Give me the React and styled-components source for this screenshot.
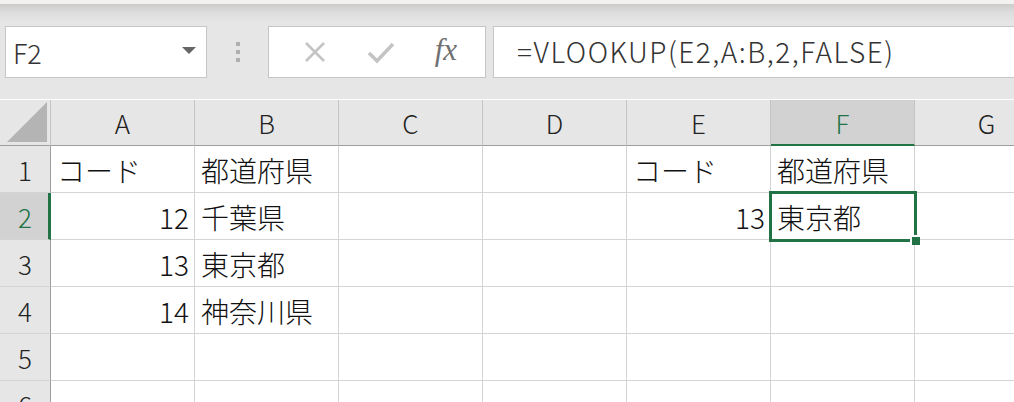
import styled, { createGlobalStyle } from 'styled-components'

const GREEN = '#217346'
const GRID = '#d4d4d4'
const HEAD_BG = '#e6e6e6'
const HEAD_SEL = '#d2d2d2'

const GlobalStyle = createGlobalStyle`
    html, body {
        margin: 0;
        padding: 0;
        background: #ffffff;
        overflow: hidden;
    }
    body {
        font-family: "Noto Sans CJK JP", "Noto Sans", sans-serif;
        color: #222;
    }
`

export const Window = styled.div`
    width: 1014px;
    height: 402px;
    overflow: hidden;
    background: ${HEAD_BG};
    display: flex;
    flex-direction: column;
`

export const TopStrip = styled.div`
    height: 4px;
    background: #f3f2f1;
    flex-shrink: 0;
`

export const FormulaBar = styled.div`
    height: 95px;
    flex-shrink: 0;
    display: flex;
    align-items: flex-start;
    padding: 22px 0 0 5px;
    box-sizing: border-box;
    background: linear-gradient(to bottom, #cbcbcb 0px, #dcdcdc 8px, ${HEAD_BG} 18px);
`

export const Box = styled.div`
    height: 52px;
    box-sizing: border-box;
    background: #fff;
    border: 1px solid #c6c6c6;
    display: flex;
    align-items: center;
`

export const NameBox = styled(Box)`
    width: 202px;
    padding: 0 10px 0 7px;
    justify-content: space-between;
    font-size: 27px;
    font-weight: 300;
    color: #333;
`

export const Caret = styled.span`
    width: 0;
    height: 0;
    border-left: 7px solid transparent;
    border-right: 7px solid transparent;
    border-top: 7px solid #666;
    margin-top: -4px;
`

export const Grip = styled.div`
    width: 61px;
    display: flex;
    flex-direction: column;
    align-items: center;
    gap: 4px;
    padding-top: 16px;
    span {
        width: 4px;
        height: 4px;
        background: #b0b0b0;
    }
`

export const ActionBox = styled(Box)`
    width: 218px;
    justify-content: space-around;
    padding: 0 8px 0 14px;
`

export const Fx = styled.span`
    font-family: "Liberation Serif", serif;
    font-style: italic;
    font-size: 31px;
    color: #707070;
    margin-top: -4px;
`

export const FormulaInput = styled(Box)`
    flex: 1;
    margin-left: 7px;
    padding: 0 0 2px 23px;
    font-size: 28px;
    font-weight: 300;
    color: #333;
    letter-spacing: 1.5px;
    border-right: none;
`

export const Sheet = styled.div`
    display: grid;
    grid-template-columns: 51px repeat(7, 144px);
    grid-template-rows: 47px;
    grid-auto-rows: 47px;
    background: #fff;
`

export const ColHead = styled.div`
    box-sizing: border-box;
    display: flex;
    align-items: center;
    justify-content: center;
    background: ${p => p.$active ? HEAD_SEL : HEAD_BG};
    color: ${p => p.$active ? GREEN : '#222'};
    font-size: 26px;
    font-weight: 300;
    border-right: 1px solid #c4c4c4;
    border-bottom: ${p => p.$active ? `2px solid ${GREEN}` : '1px solid #9e9e9e'};
    padding-top: ${p => p.$active ? '1px' : '0'};
    margin-top: 1px;
`

export const Corner = styled(ColHead)`
    align-items: flex-end;
    justify-content: flex-end;
    padding: 0 3px 3px 0;
`

export const RowHead = styled.div`
    box-sizing: border-box;
    display: flex;
    align-items: center;
    justify-content: center;
    background: ${p => p.$active ? HEAD_SEL : HEAD_BG};
    color: ${p => p.$active ? GREEN : '#222'};
    font-size: 26px;
    font-weight: 300;
    border-bottom: 1px solid ${GRID};
    border-right: ${p => p.$active ? `3px solid ${GREEN}` : '1px solid #9e9e9e'};
    padding-left: ${p => p.$active ? '2px' : '0'};
`

export const Cell = styled.div`
    position: relative;
    box-sizing: border-box;
    display: flex;
    align-items: center;
    justify-content: ${p => p.$num ? 'flex-end' : 'flex-start'};
    padding: 2px 5px 0 6px;
    font-size: 28px;
    font-weight: 300;
    color: #111;
    white-space: nowrap;
    border-right: 1px solid ${GRID};
    border-bottom: 1px solid ${GRID};
`

export const Selection = styled.div`
    position: absolute;
    z-index: 2;
    left: -2px;
    top: -2px;
    right: -3px;
    bottom: -3px;
    border: 3px solid ${GREEN};
    pointer-events: none;
`

export const Handle = styled.div`
    position: absolute;
    right: -6px;
    bottom: -6px;
    width: 8px;
    height: 8px;
    background: ${GREEN};
    border-left: 2px solid #fff;
    border-top: 2px solid #fff;
`

const columns = ['A', 'B', 'C', 'D', 'E', 'F', 'G']

const rows = [
    { A: 'コード', B: '都道府県', E: 'コード', F: '都道府県' },
    { A: '12', B: '千葉県', E: '13', F: '東京都' },
    { A: '13', B: '東京都' },
    { A: '14', B: '神奈川県' },
    {},
    {},
]

const isNum = v => /^\d+$/.test(v || '')

export default function App() {
    return (
        <Window>
            <GlobalStyle />
            <TopStrip />
            <FormulaBar>
                <NameBox>
                    <span>F2</span>
                    <Caret />
                </NameBox>
                <Grip><span /><span /><span /></Grip>
                <ActionBox>
                    <svg width="24" height="24" viewBox="0 0 24 24">
                        <path d="M3 3 L21 21 M21 3 L3 21" stroke="#c4c4c4" strokeWidth="2.6" fill="none" />
                    </svg>
                    <svg width="28" height="24" viewBox="0 0 28 24">
                        <path d="M2 13 L10 21 L26 4" stroke="#c4c4c4" strokeWidth="3.6" fill="none" />
                    </svg>
                    <Fx>fx</Fx>
                </ActionBox>
                <FormulaInput>=VLOOKUP(E2,A:B,2,FALSE)</FormulaInput>
            </FormulaBar>
            <Sheet>
                <Corner>
                    <svg width="40" height="40" viewBox="0 0 40 40">
                        <polygon points="0,40 40,40 40,0" fill="#b4b4b4" />
                    </svg>
                </Corner>
                {columns.map(c => (
                    <ColHead key={c} $active={c === 'F'}>{c}</ColHead>
                ))}
                {rows.map((row, i) => [
                    <RowHead key={`h${i}`} $active={i === 1}>{i + 1}</RowHead>,
                    ...columns.map(c => (
                        <Cell key={`${c}${i}`} $num={isNum(row[c])}>
                            {row[c]}
                            {c === 'F' && i === 1 && (
                                <Selection><Handle /></Selection>
                            )}
                        </Cell>
                    )),
                ])}
            </Sheet>
        </Window>
    )
}
